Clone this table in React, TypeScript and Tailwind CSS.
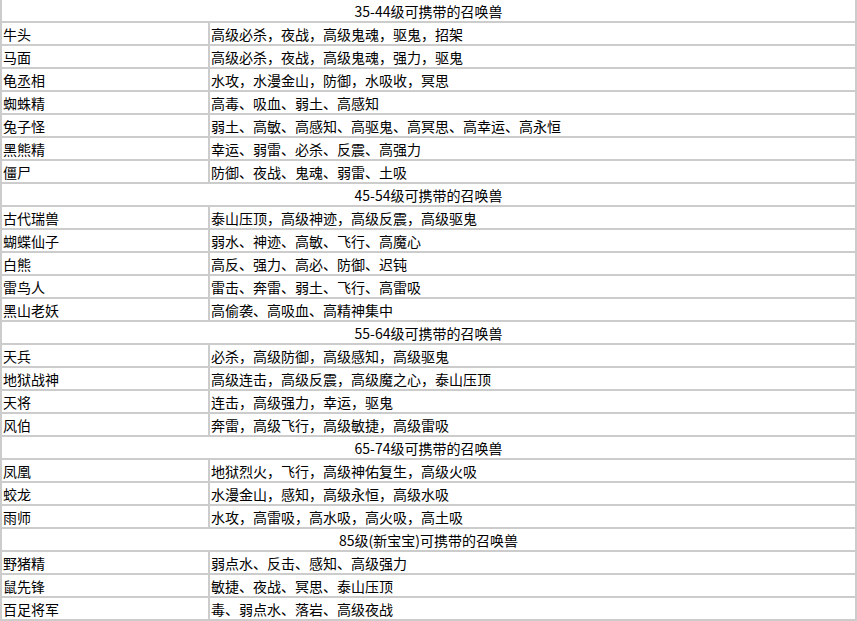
const groups: { title: string; rows: [string, string][] }[] = [
  {
    title: "35-44级可携带的召唤兽",
    rows: [
      ["牛头", "高级必杀，夜战，高级鬼魂，驱鬼，招架"],
      ["马面", "高级必杀，夜战，高级鬼魂，强力，驱鬼"],
      ["龟丞相", "水攻，水漫金山，防御，水吸收，冥思"],
      ["蜘蛛精", "高毒、吸血、弱土、高感知"],
      ["兔子怪", "弱土、高敏、高感知、高驱鬼、高冥思、高幸运、高永恒"],
      ["黑熊精", "幸运、弱雷、必杀、反震、高强力"],
      ["僵尸", "防御、夜战、鬼魂、弱雷、土吸"],
    ],
  },
  {
    title: "45-54级可携带的召唤兽",
    rows: [
      ["古代瑞兽", "泰山压顶，高级神迹，高级反震，高级驱鬼"],
      ["蝴蝶仙子", "弱水、神迹、高敏、飞行、高魔心"],
      ["白熊", "高反、强力、高必、防御、迟钝"],
      ["雷鸟人", "雷击、奔雷、弱土、飞行、高雷吸"],
      ["黑山老妖", "高偷袭、高吸血、高精神集中"],
    ],
  },
  {
    title: "55-64级可携带的召唤兽",
    rows: [
      ["天兵", "必杀，高级防御，高级感知，高级驱鬼"],
      ["地狱战神", "高级连击，高级反震，高级魔之心，泰山压顶"],
      ["天将", "连击，高级强力，幸运，驱鬼"],
      ["风伯", "奔雷，高级飞行，高级敏捷，高级雷吸"],
    ],
  },
  {
    title: "65-74级可携带的召唤兽",
    rows: [
      ["凤凰", "地狱烈火，飞行，高级神佑复生，高级火吸"],
      ["蛟龙", "水漫金山，感知，高级永恒，高级水吸"],
      ["雨师", "水攻，高雷吸，高水吸，高火吸，高土吸"],
    ],
  },
  {
    title: "85级(新宝宝)可携带的召唤兽",
    rows: [
      ["野猪精", "弱点水、反击、感知、高级强力"],
      ["鼠先锋", "敏捷、夜战、冥思、泰山压顶"],
      ["百足将军", "毒、弱点水、落岩、高级夜战"],
    ],
  },
];

export default function App() {
  return (
    <div
      className="w-[857px] h-[621px] overflow-hidden bg-white text-black text-[14px] leading-[22px]"
      style={{ fontFamily: '"Microsoft YaHei", "Noto Sans CJK SC", sans-serif' }}
    >
      <div className="border-x-2 border-[#cccccc]">
        {groups.map((g) => (
          <div key={g.title}>
            <div className="h-[23px] border-b-2 border-[#cccccc] text-center">{g.title}</div>
            {g.rows.map(([name, skills]) => (
              <div key={name} className="flex h-[23px] border-b-2 border-[#cccccc]">
                <div className="w-[208px] shrink-0 pl-[1px] border-r-2 border-[#cccccc]">{name}</div>
                <div className="flex-1 pl-[1px]">{skills}</div>
              </div>
            ))}
          </div>
        ))}
      </div>
    </div>
  );
}
